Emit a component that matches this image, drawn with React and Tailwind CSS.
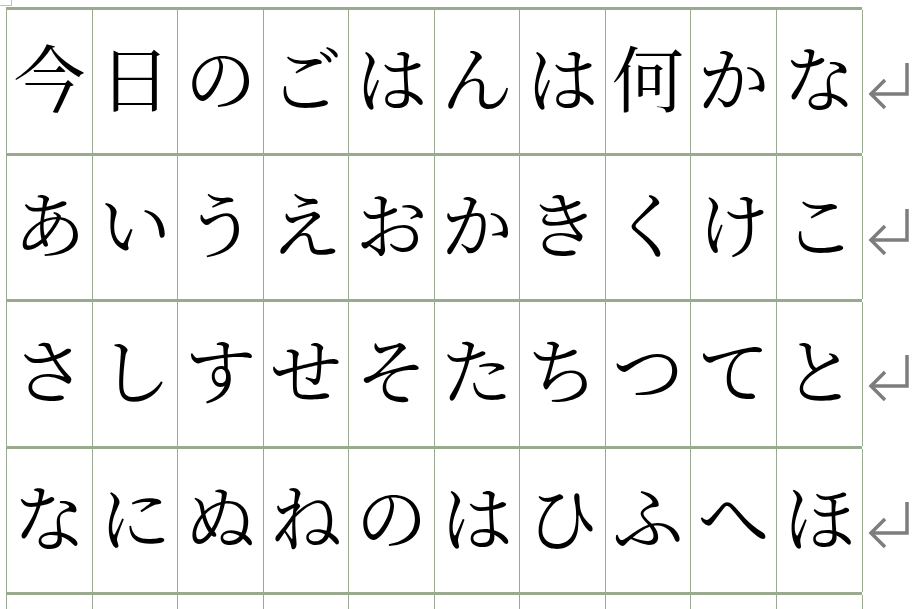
import React from "react";

const rows = [
  ["今", "日", "の", "ご", "は", "ん", "は", "何", "か", "な"],
  ["あ", "い", "う", "え", "お", "か", "き", "く", "け", "こ"],
  ["さ", "し", "す", "せ", "そ", "た", "ち", "つ", "て", "と"],
  ["な", "に", "ぬ", "ね", "の", "は", "ひ", "ふ", "へ", "ほ"],
  ["", "", "", "", "", "", "", "", "", ""],
];

const heights = ["h-[146px]", "h-[146px]", "h-[147px]", "h-[146px]", "h-[146px]"];

function ReturnMark() {
  return (
    <svg width="46" height="50" viewBox="0 0 46 50" className="shrink-0">
      <g fill="none" stroke="#7d7d7d" strokeWidth="3.5" strokeLinecap="butt" strokeLinejoin="miter">
        <path d="M41 2 V33 H6" />
        <path d="M19 19 L5 33 L19 47" />
      </g>
    </svg>
  );
}

export default function App() {
  return (
    <div
      className="w-[913px] h-[609px] overflow-hidden bg-white"
      style={{ fontFamily: '"Noto Serif CJK JP", "IPAMincho", "TakaoMincho", "Noto Sans CJK JP", "Noto Sans", serif' }}
    >
      <div className="h-[7px]">
        <div className="w-[12px] h-[6px] border-r border-b border-[#bfbfbf]" />
      </div>
      <div className="ml-[6px] flex flex-col">
        {rows.map((row, i) => (
          <div key={i} className={`flex ${heights[i]} shrink-0`}>
            <div className="flex flex-col w-[857px] shrink-0">
              <div className="h-[3px] w-[856px] shrink-0 bg-[#9aaa8e]" />
              <div className="flex-1 grid grid-cols-[86px_85px_86px_85px_86px_85px_86px_85px_86px_86px] border-r border-[#9aaa8e] w-[857px]">
                {row.map((ch, j) => (
                  <div
                    key={j}
                    className="border-l border-[#9aaa8e] flex items-center justify-center text-[72px] leading-none text-black pb-[14px]"
                  >
                    {ch}
                  </div>
                ))}
              </div>
            </div>
            {i < 4 && (
              <div className="pl-[3px] pt-[54px]">
                <ReturnMark />
              </div>
            )}
          </div>
        ))}
      </div>
    </div>
  );
}
